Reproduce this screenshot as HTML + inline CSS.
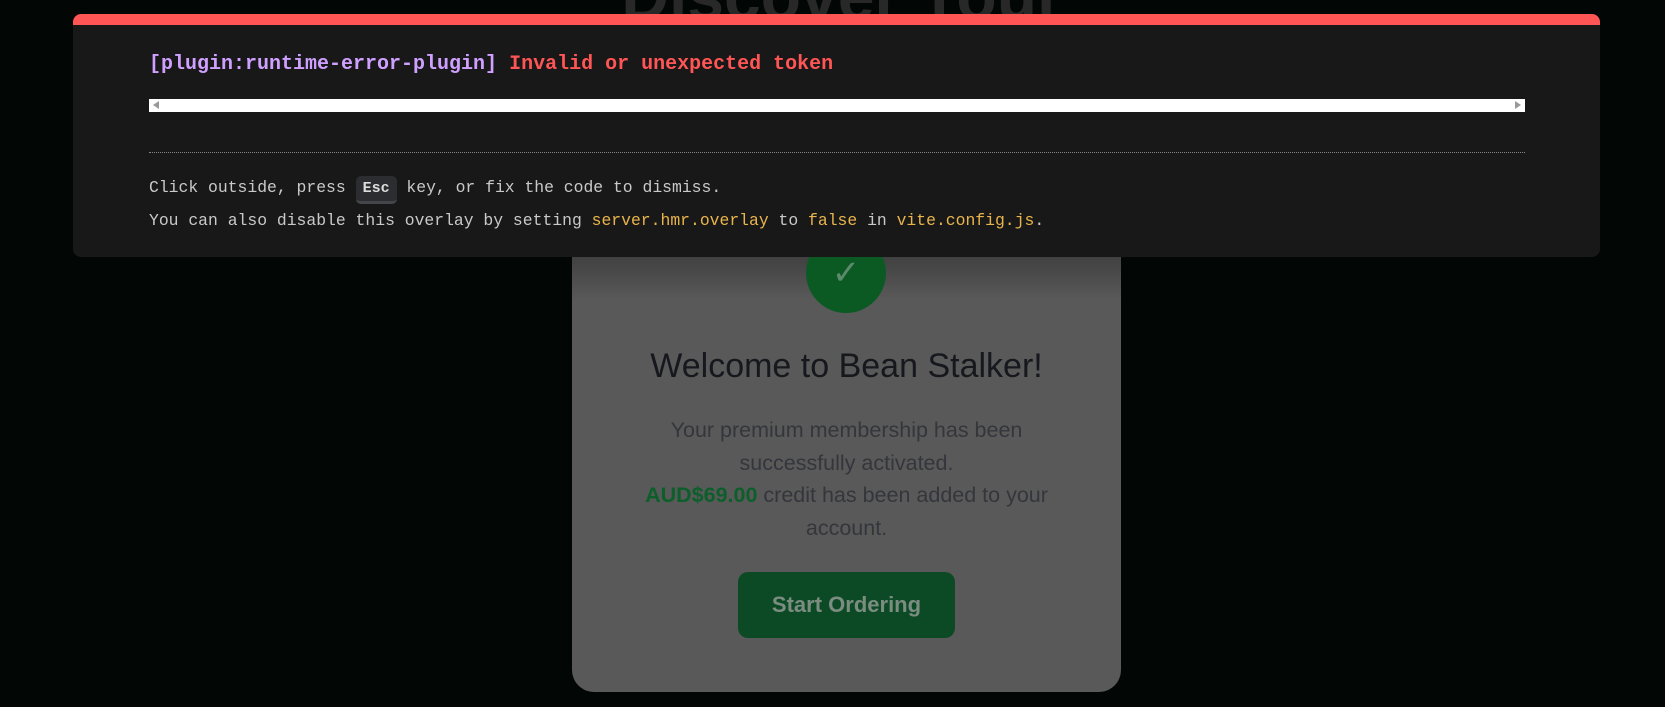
<!DOCTYPE html>
<html><head><meta charset="utf-8"><style>
*{margin:0;padding:0;box-sizing:border-box}
html,body{width:1665px;height:707px;overflow:hidden;background:#020604;position:relative;font-family:"Liberation Sans",sans-serif}
.bgh{position:absolute;left:0;top:-42px;width:1684px;text-align:center;font-size:66px;font-weight:bold;color:#282828}
.card{position:absolute;left:572px;top:200px;width:549px;height:492px;background:#595959;border-radius:22px;text-align:center;overflow:hidden}
.shade{position:absolute;left:0;top:0;width:549px;height:100px;background:linear-gradient(#262626,#3a3a3a 45%,rgba(89,89,89,0))}
.circle{position:absolute;left:234px;top:33px;width:80px;height:80px;border-radius:50%;background:#0b5a24;color:#5d8a6a;font-size:34px;line-height:80px}
.title{position:absolute;left:0;width:549px;top:145px;font-size:34px;line-height:42px;color:#16181e}
.body{position:absolute;left:0;width:549px;top:214px;font-size:21.5px;line-height:32.5px;color:#35363c}
.body b{color:#0c5f2a}
.btn{position:absolute;left:166px;top:372px;width:217px;height:66px;border-radius:10px;background:#0b4a24;color:#7b8c80;font-size:22px;font-weight:bold;line-height:66px}
.ov{position:absolute;left:73px;top:14px;width:1527px;height:243px;background:#181818;border-top:11px solid #ff5555;border-radius:8px;font-family:"Liberation Mono",monospace}
.t1{position:absolute;left:76px;top:28px;font-size:20px;font-weight:bold;color:#cfa0ff;white-space:nowrap}
.t1 span{color:#ff5555}
.bar{position:absolute;left:76px;top:74px;width:1376px;height:13px;background:#fff}
.bar i{position:absolute;top:2px;width:0;height:0;border-top:4.5px solid transparent;border-bottom:4.5px solid transparent}
.hr{position:absolute;left:76px;top:127px;width:1376px;border-top:1px dotted #888}
.l{position:absolute;left:76px;font-size:16.4px;color:#c9c9c9;white-space:nowrap}
.l span{color:#e9b44c}
kbd{display:inline-block;font-family:"Liberation Mono",monospace;font-weight:bold;font-size:15px;color:#ddd;background:#2c2d31;border-radius:5px;padding:4px 7px;border-bottom:3px solid #45464b}
</style></head><body>
<div class="bgh">Discover Your</div>
<div class="card">
 <div class="shade"></div>
 <div class="circle">✓</div>
 <div class="title">Welcome to Bean Stalker!</div>
 <div class="body">Your premium membership has been<br>successfully activated.<br><b>AUD$69.00</b> credit has been added to your<br>account.</div>
 <div class="btn">Start Ordering</div>
</div>
<div class="ov">
 <div class="t1">[plugin:runtime-error-plugin] <span>Invalid or unexpected token</span></div>
 <div class="bar"><i style="left:4px;border-right:6px solid #999"></i><i style="right:4px;border-left:6px solid #999"></i></div>
 <div class="hr"></div>
 <div class="l" style="top:151px">Click outside, press <kbd>Esc</kbd> key, or fix the code to dismiss.</div>
 <div class="l" style="top:186px">You can also disable this overlay by setting <span>server.hmr.overlay</span> to <span>false</span> in <span>vite.config.js</span>.</div>
</div>
</body></html>
